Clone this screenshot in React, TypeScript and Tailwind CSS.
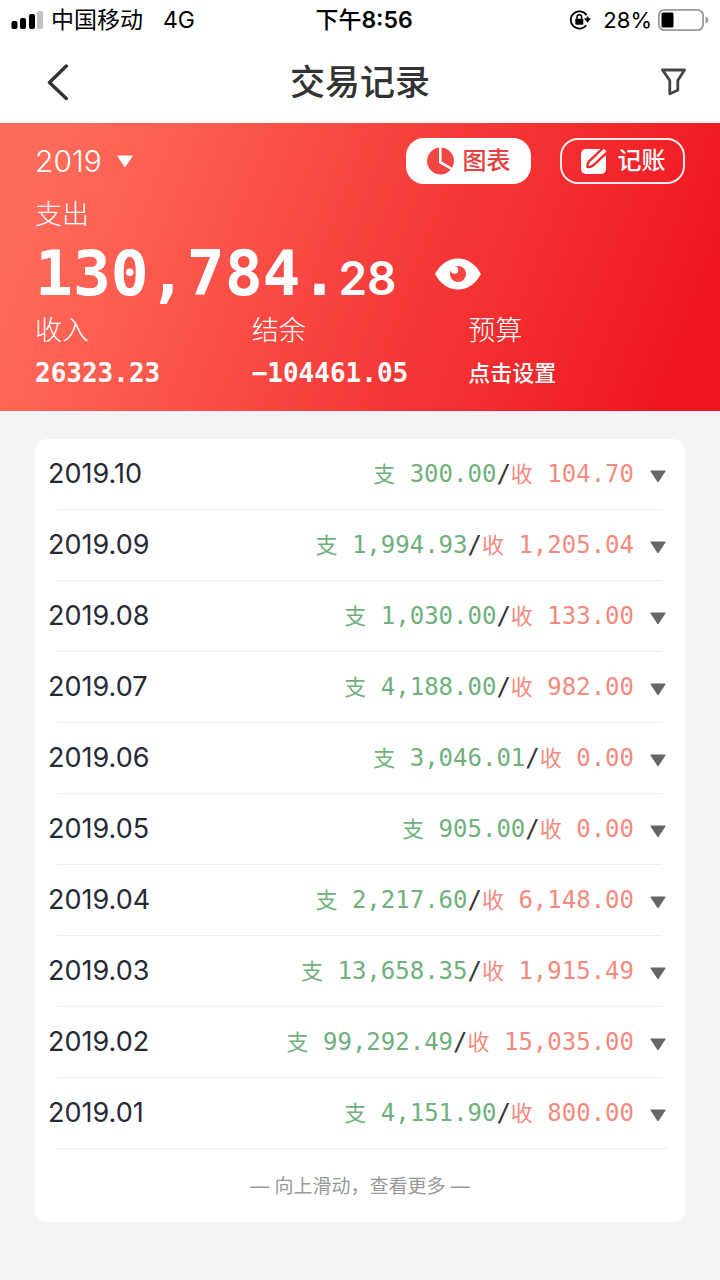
import { useState } from 'react';

interface MonthRecord { month: string; expense: string; income: string; }

const RECORDS: MonthRecord[] = [
  { month: '2019.10', expense: '300.00', income: '104.70' },
  { month: '2019.09', expense: '1,994.93', income: '1,205.04' },
  { month: '2019.08', expense: '1,030.00', income: '133.00' },
  { month: '2019.07', expense: '4,188.00', income: '982.00' },
  { month: '2019.06', expense: '3,046.01', income: '0.00' },
  { month: '2019.05', expense: '905.00', income: '0.00' },
  { month: '2019.04', expense: '2,217.60', income: '6,148.00' },
  { month: '2019.03', expense: '13,658.35', income: '1,915.49' },
  { month: '2019.02', expense: '99,292.49', income: '15,035.00' },
  { month: '2019.01', expense: '4,151.90', income: '800.00' },
];

const STATS = [
  { label: '收入', value: '26323.23' },
  { label: '结余', value: '−104461.05' },
  { label: '预算', value: '点击设置' },
];

function Caret({ className }: { className?: string }) {
  return (
    <svg viewBox="0 0 16 13" className={className} fill="currentColor" stroke="currentColor" strokeWidth="1.5" strokeLinejoin="round" aria-hidden="true">
      <path d="M1.2 1.2h13.6L8 11.4z" />
    </svg>
  );
}

function StatusBar() {
  return (
    <div className="grid h-10 grid-cols-[1fr_auto_1fr] items-center px-[11px] text-[23px] leading-8 text-black">
      <div className="flex items-center">
        <svg viewBox="0 0 32 20" className="mr-2 h-5 w-8" aria-hidden="true">
          <rect x="0.5" y="11" width="6" height="8" rx="2" />
          <rect x="9" y="8" width="6" height="11" rx="2" />
          <rect x="18" y="4" width="6" height="15" rx="2" />
          <rect x="26" y="1" width="6" height="18" rx="2" fill="#c2c2c2" />
        </svg>
        <span>中国移动</span>
        <span className="ml-5">4G</span>
      </div>
      <div className="ml-2 font-semibold"><span className="font-medium">下午</span>8:56</div>
      <div className="flex items-center justify-end">
        <svg viewBox="0 0 22 20" className="mr-3 h-5 w-[22px]" fill="none" stroke="#000" aria-hidden="true">
          <path d="M17.5 5.2A8.6 8.6 0 1 0 17.2 15.2" strokeWidth="1.8" />
          <path d="M18.6 8.5v-2" strokeWidth="1.8" />
          <path d="M15 8.3h7l-3.5 4.4z" fill="#000" stroke="none" />
          <rect x="6.3" y="8.8" width="8" height="6" rx="0.8" fill="#000" stroke="none" />
          <path d="M8 9V7a2.3 2.3 0 0 1 4.6 0v2" strokeWidth="1.5" />
        </svg>
        <span className="mr-[6px] text-[22px]">28%</span>
        <svg viewBox="0 0 51 22" className="h-[22px] w-[51px]" aria-hidden="true">
          <rect x="0.9" y="0.9" width="44.2" height="20.2" rx="5.5" fill="none" stroke="#9b9b9b" strokeWidth="1.8" />
          <rect x="3.5" y="3.5" width="12" height="15" rx="1.5" />
          <path d="M47.5 7.5c3.8 1 3.8 6 0 7z" fill="#9b9b9b" />
        </svg>
      </div>
    </div>
  );
}

export default function App() {
  const [year, setYear] = useState('2019');
  const [hidden, setHidden] = useState(false);

  return (
    <div className="min-h-screen bg-[#f4f4f4] font-[Inter,'Noto_Sans_CJK_SC',sans-serif]">
      <header className="bg-white">
        <StatusBar />
        <div className="grid h-[83px] grid-cols-[1fr_auto_1fr] items-center px-[34px]">
          <button type="button" aria-label="返回" className="ml-3 flex w-6 text-[#333]">
            <svg viewBox="0 0 24 36" className="h-9 w-6" fill="none" stroke="currentColor" strokeWidth="3.4" strokeLinecap="round" strokeLinejoin="round">
              <path d="M20.3 2L3.5 18.5l16.8 16" />
            </svg>
          </button>
          <h1 className="text-[35px] font-medium leading-[48px] text-[#333]">交易记录</h1>
          <button type="button" aria-label="筛选" className="flex justify-self-end text-[#444]">
            <svg viewBox="0 0 25 28" className="h-7 w-[25px]" fill="none" stroke="currentColor" strokeWidth="2.8" strokeLinejoin="round">
              <path d="M1.5 2h22l-6.7 10.5v9.7l-8 3.6V12.5z" />
            </svg>
          </button>
        </div>
      </header>

      <section className="bg-[linear-gradient(111deg,#ff6b5b_8%,#ee161f_93%)] px-[35px] pb-[21px] pt-[15px] text-white">
        <div className="flex items-center">
          <label className="relative flex items-center">
            <select
              aria-label="年份"
              value={year}
              onChange={e => setYear(e.target.value)}
              className="w-[98px] appearance-none bg-transparent text-[30px] font-light leading-9 outline-none"
            >
              <option>2019</option>
              <option>2018</option>
            </select>
            <Caret className="pointer-events-none absolute right-0 h-[13px] w-4" />
          </label>
          <button type="button" className="ml-auto flex h-[46px] w-[125px] items-center justify-center rounded-[18px] bg-white text-2xl font-medium text-[#e8403f]">
            <svg viewBox="0 0 28 28" className="mr-2 size-7" aria-hidden="true">
              <circle cx="13.5" cy="14" r="13.4" fill="#f04743" />
              <path d="M13.3 0v15.2L26.5 23" fill="none" stroke="#fff" strokeWidth="2.6" />
            </svg>
            图表
          </button>
          <button type="button" className="ml-[29px] flex h-[46px] w-[125px] items-center justify-center rounded-[18px] border-2 border-white/90 text-2xl font-medium">
            <svg viewBox="0 0 28 28" className="mr-2.5 size-7" aria-hidden="true">
              <path d="M6 2h17a3 3 0 0 1 3 3v17a5 5 0 0 1-5 5H6a5 5 0 0 1-5-5V7a5 5 0 0 1 5-5z" fill="#fff" />
              <path d="M22.5 1.5L9 14.4c-1.6 1.6-1.7 4-1.6 5.6 1.800.1 4.200 0 5.800-1.600L27 5.600" fill="none" stroke="#f02a2c" strokeWidth="2.4" strokeLinejoin="round" />
            </svg>
            记账
          </button>
        </div>

        <p className="mt-3 text-[27px] font-light leading-[38px]">支出</p>
        <div className="flex h-20 items-center">
          <p className="flex items-baseline pt-1 font-bold leading-[80px]">
            <span className="font-['DejaVu_Sans_Mono',monospace] text-[63px]">{hidden ? '***,***.' : '130,784.'}</span>
            <span className="text-[46px] font-semibold">{hidden ? '**' : '28'}</span>
          </p>
          <button type="button" aria-label="显示或隐藏金额" className="ml-[38px]" onClick={() => setHidden(!hidden)}>
            <svg viewBox="0 0 46 32" className="h-8 w-[46px]" aria-hidden="true">
              <path d="M0 16C5.5 6 13.5.5 23 .5S40.5 6 46 16C40.5 26 32.5 31.5 23 31.5S5.5 26 0 16z" fill="#fff" />
              <circle cx="23" cy="16" r="8" fill="#f74542" />
              <circle cx="19.5" cy="12" r="3.8" fill="#fff" />
            </svg>
          </button>
        </div>

        <dl className="grid grid-cols-3">
          {STATS.map(item => (
            <div key={item.label}>
              <dt className="text-[27px] font-light leading-[34px]">{item.label}</dt>
              <dd className="mt-2 leading-[34px]">
                {item.label === '预算' ? (
                  <button type="button" className="block text-[22px] font-medium">{item.value}</button>
                ) : (
                  <span className="block font-['DejaVu_Sans_Mono',monospace] text-[26px] font-bold">{item.value}</span>
                )}
              </dd>
            </div>
          ))}
        </dl>
      </section>

      <main className="px-[35px] py-7">
        <div className="rounded-xl bg-white">
          <ul>
            {RECORDS.map(r => (
              <li key={r.month} className="group">
                <button type="button" className="flex h-[70px] w-full items-center pl-[13px] pr-[19px]">
                  <span className="text-[27px] text-[#262a36]">{r.month}</span>
                  <span className="ml-auto flex items-baseline whitespace-pre font-['DejaVu_Sans_Mono',monospace] text-2xl text-[#333]">
                    <span className="text-[#6fb07c]"><span className="font-['Noto_Sans_CJK_SC',sans-serif] text-[22px] leading-7">支</span> {r.expense}</span>
                    <span>/</span>
                    <span className="text-[#f48a7e]"><span className="font-['Noto_Sans_CJK_SC',sans-serif] text-[22px] leading-7">收</span> {r.income}</span>
                  </span>
                  <Caret className="ml-4 mt-1 h-[13px] w-4 text-[#666]" />
                </button>
                <div className="ml-[22px] mr-[23px] h-px bg-[#eee] group-last:mr-[17px]" />
              </li>
            ))}
          </ul>
          <p className="pb-[21px] pt-[23px] text-center text-[19px] leading-[29px] text-[#999]">— 向上滑动，查看更多 —</p>
        </div>
      </main>
    </div>
  );
}
